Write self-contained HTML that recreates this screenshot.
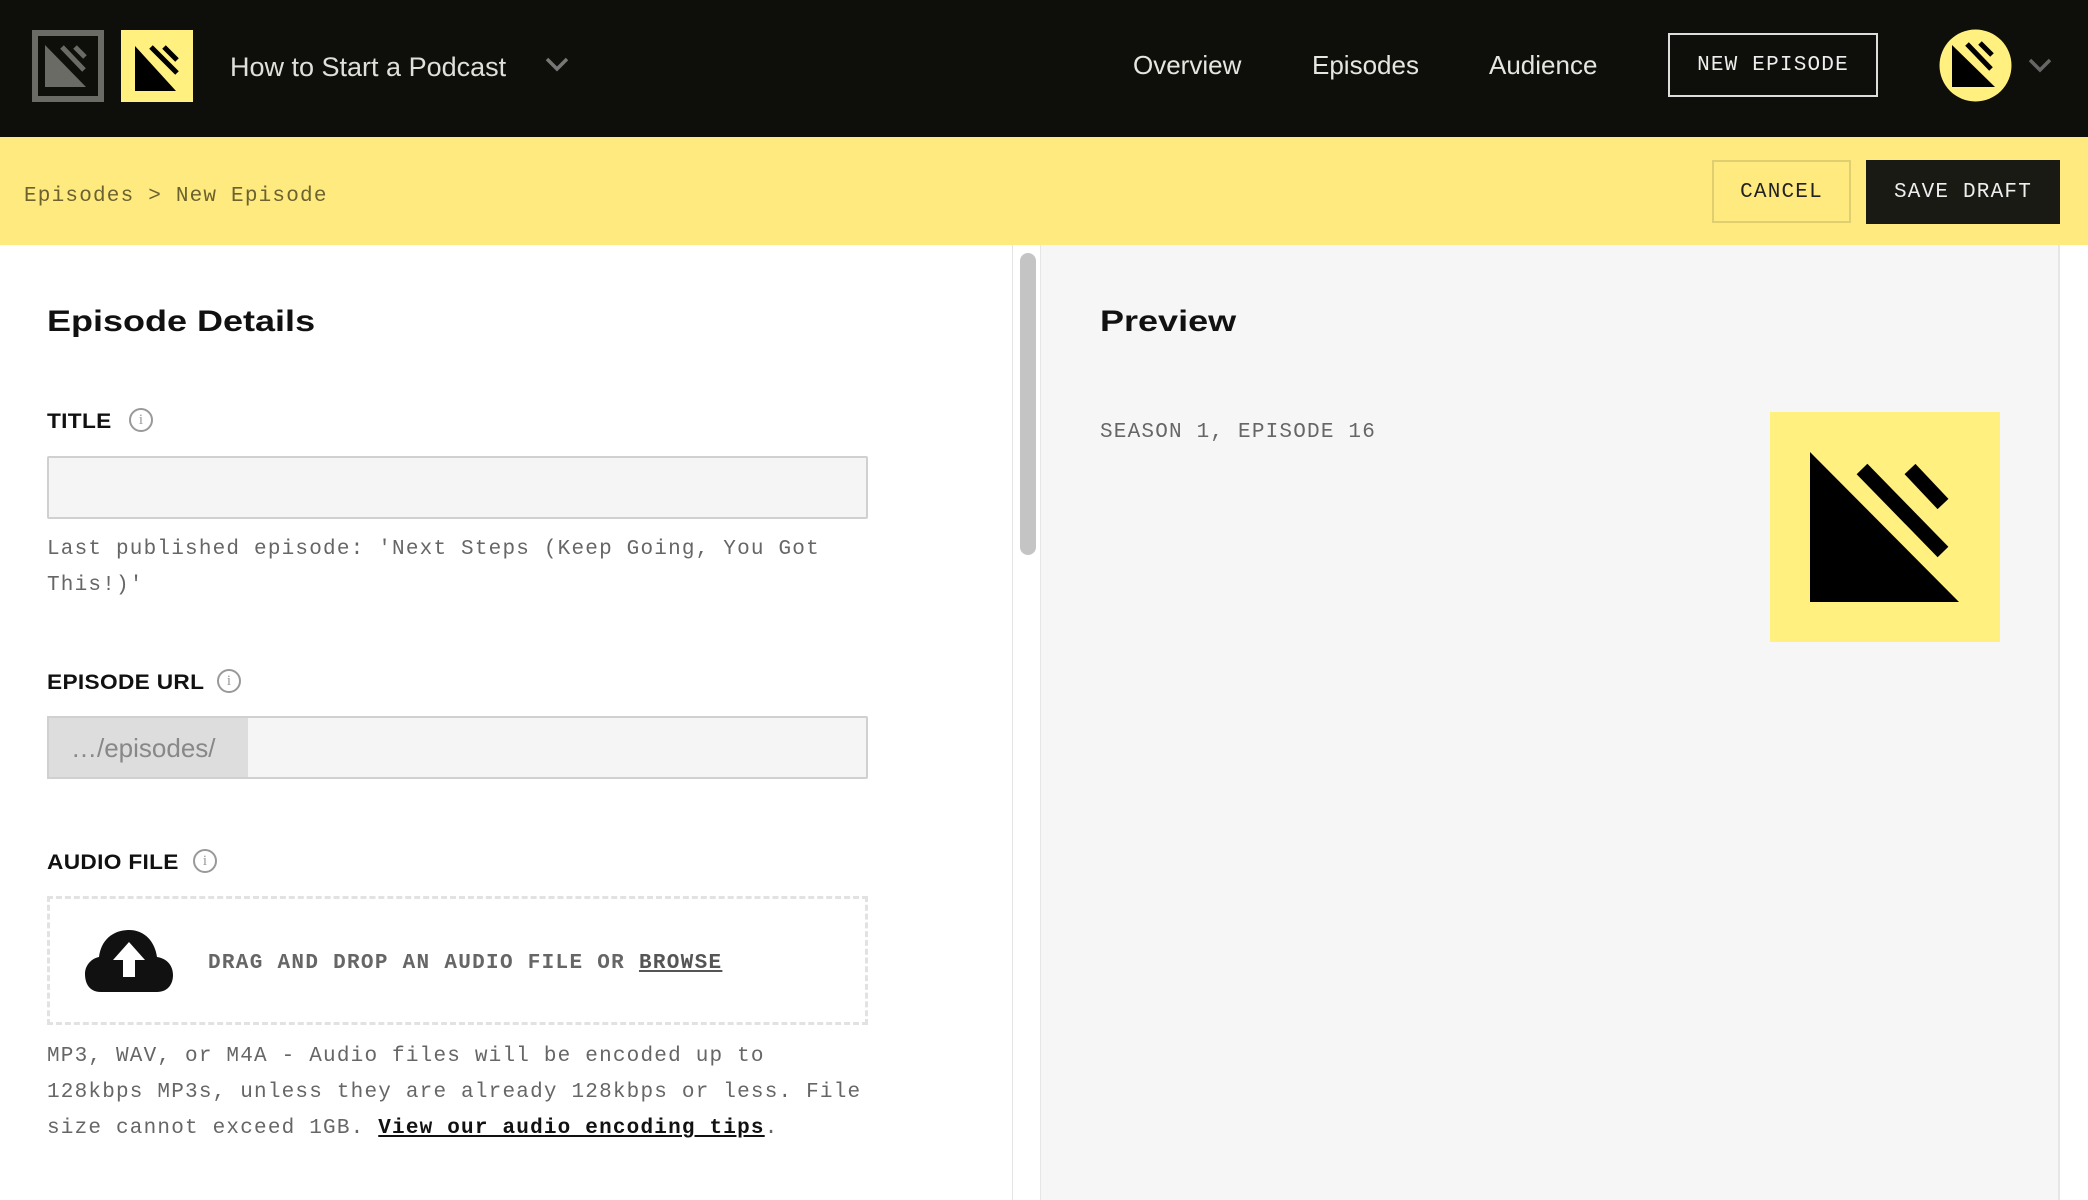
<!DOCTYPE html>
<html><head><meta charset="utf-8"><style>
*{box-sizing:border-box;margin:0;padding:0}
body{width:2088px;height:1200px;overflow:hidden;background:#fff;font-family:"Liberation Sans",sans-serif;position:relative}
.mono{font-family:"Liberation Mono",monospace;font-size:21px;letter-spacing:1.2px}
.abs{position:absolute}
.hdr{position:absolute;left:0;top:0;width:2088px;height:137px;background:#0e0e0a}
.bar{position:absolute;left:0;top:137px;width:2088px;height:108px;background:#ffea80}
.nav{position:absolute;top:48px;font-size:26px;color:#e6e6e0;line-height:34px}
.lbl{position:absolute;left:47px;font-weight:bold;font-size:21px;color:#111;letter-spacing:0.3px;transform:scaleX(1.08);transform-origin:left}
.info{position:absolute;width:24px;height:24px;border:2px solid #999;border-radius:50%;color:#999;font-size:15px;line-height:20px;text-align:center;font-family:"Liberation Serif",serif}
.inp{position:absolute;left:47px;width:821px;height:63px;background:#f5f5f5;border:2px solid #d0d0d0;border-radius:2px}
.help{position:absolute;left:47px;color:#666;line-height:36px}
.h2{position:absolute;font-size:30px;font-weight:bold;color:#111;transform:scaleX(1.2);transform-origin:left}
</style></head><body>
<div class="hdr"></div>
<svg class="abs" style="left:32px;top:30px" width="72" height="72" viewBox="0 0 72 72"><rect x="3" y="3" width="66" height="66" fill="none" stroke="#6b6b65" stroke-width="6"/><path d="M13 15 L13 57 L54 57 Z" fill="#6b6b65"/><path d="M30 17 L52 40 M43 17 L53 27" stroke="#6b6b65" stroke-width="5"/></svg>
<svg class="abs" style="left:121px;top:30px" width="72" height="72" viewBox="0 0 72 72"><rect width="72" height="72" fill="#fff080"/><path d="M14 16 L14 61 L55 61 Z" fill="#000"/><path d="M30 17 L56 43 M43 17 L56 30" stroke="#000" stroke-width="5"/></svg>
<div class="abs" style="left:230px;top:50px;font-size:27px;color:#e0e0da;line-height:34px">How to Start a Podcast</div>
<svg class="abs" style="left:545px;top:56px" width="24" height="16"><path d="M2 3 L12 13 L22 3" stroke="#777" stroke-width="3.5" fill="none"/></svg>
<div class="nav" style="left:1133px">Overview</div>
<div class="nav" style="left:1312px">Episodes</div>
<div class="nav" style="left:1489px">Audience</div>
<div class="abs mono" style="left:1668px;top:33px;width:210px;height:64px;border:2px solid #ddd;color:#eee;text-align:center;line-height:62px">NEW EPISODE</div>
<svg class="abs" style="left:1939px;top:29px" width="73" height="73" viewBox="0 0 73 73"><circle cx="36.5" cy="36.5" r="36" fill="#fff080"/><path d="M13 16 L13 58 L56 58 Z" fill="#000"/><path d="M28 15 L52 40 M41 14 L53 26" stroke="#000" stroke-width="5"/></svg>
<svg class="abs" style="left:2028px;top:57px" width="24" height="16"><path d="M2 3 L12 13 L22 3" stroke="#666" stroke-width="3.5" fill="none"/></svg>

<div class="bar"></div>
<div class="abs mono" style="left:24px;top:185px;color:#6b6230">Episodes &gt; New Episode</div>
<div class="abs mono" style="left:1712px;top:160px;width:139px;height:63px;border:2px solid #e0cf70;color:#222;text-align:center;line-height:61px">CANCEL</div>
<div class="abs mono" style="left:1866px;top:160px;width:194px;height:64px;background:#1a1a14;color:#eee;text-align:center;line-height:66px">SAVE DRAFT</div>

<div class="abs" style="left:1012px;top:245px;width:1px;height:955px;background:#e4e4e4"></div>
<div class="abs" style="left:1020px;top:253px;width:16px;height:302px;background:#c4c4c4;border-radius:8px"></div>
<div class="abs" style="left:1040px;top:245px;width:1020px;height:955px;background:#f6f6f6;border-left:1px solid #e6e6e6;border-right:2px solid #e6e6e6"></div>

<div class="h2" style="left:47px;top:305px">Episode Details</div>
<div class="lbl" style="top:410px">TITLE</div><div class="info" style="left:129px;top:408px">i</div>
<div class="inp" style="top:456px"></div>
<div class="help mono" style="top:532px">Last published episode: 'Next Steps (Keep Going, You Got<br>This!)'</div>
<div class="lbl" style="top:671px">EPISODE URL</div><div class="info" style="left:217px;top:669px">i</div>
<div class="inp" style="top:716px"></div>
<div class="abs" style="left:47px;top:716px;width:201px;height:63px;background:#ddd;border:2px solid #d0d0d0;border-right:none;color:#888;font-size:26px;line-height:61px;padding-left:22px">…/episodes/</div>
<div class="lbl" style="top:851px">AUDIO FILE</div><div class="info" style="left:193px;top:849px">i</div>
<div class="abs" style="left:47px;top:896px;width:821px;height:129px;border:3px dashed #e2e2e2"></div>
<svg class="abs" style="left:85px;top:930px" width="88" height="62" viewBox="0 0 88 62"><path d="M16 62 C2 62 0 50 0 44 C0 34 8 28 14 27 C16 10 28 0 44 0 C60 0 70 12 72 27 C80 28 88 34 88 45 C88 55 82 62 72 62 Z" fill="#111"/><path d="M44 12 L60 30 L50 30 L50 47 L38 47 L38 30 L28 30 Z" fill="#fff"/></svg>
<div class="abs mono" style="left:208px;top:952px;font-weight:bold;color:#666;letter-spacing:1.3px">DRAG AND DROP AN AUDIO FILE OR <span style="color:#555;text-decoration:underline">BROWSE</span></div>
<div class="help mono" style="top:1039px">MP3, WAV, or M4A - Audio files will be encoded up to<br>128kbps MP3s, unless they are already 128kbps or less. File<br>size cannot exceed 1GB. <b style="color:#111;text-decoration:underline">View our audio encoding tips</b>.</div>

<div class="h2" style="left:1100px;top:305px">Preview</div>
<div class="abs mono" style="left:1100px;top:421px;color:#666">SEASON 1, EPISODE 16</div>
<svg class="abs" style="left:1770px;top:412px" width="230" height="230" viewBox="0 0 230 230"><rect width="230" height="230" fill="#fff080"/><path d="M40 40 L40 190 L189 190 Z" fill="#000"/><path d="M92 57 L173 140 M140 57 L173 92" stroke="#000" stroke-width="15"/></svg>
</body></html>
